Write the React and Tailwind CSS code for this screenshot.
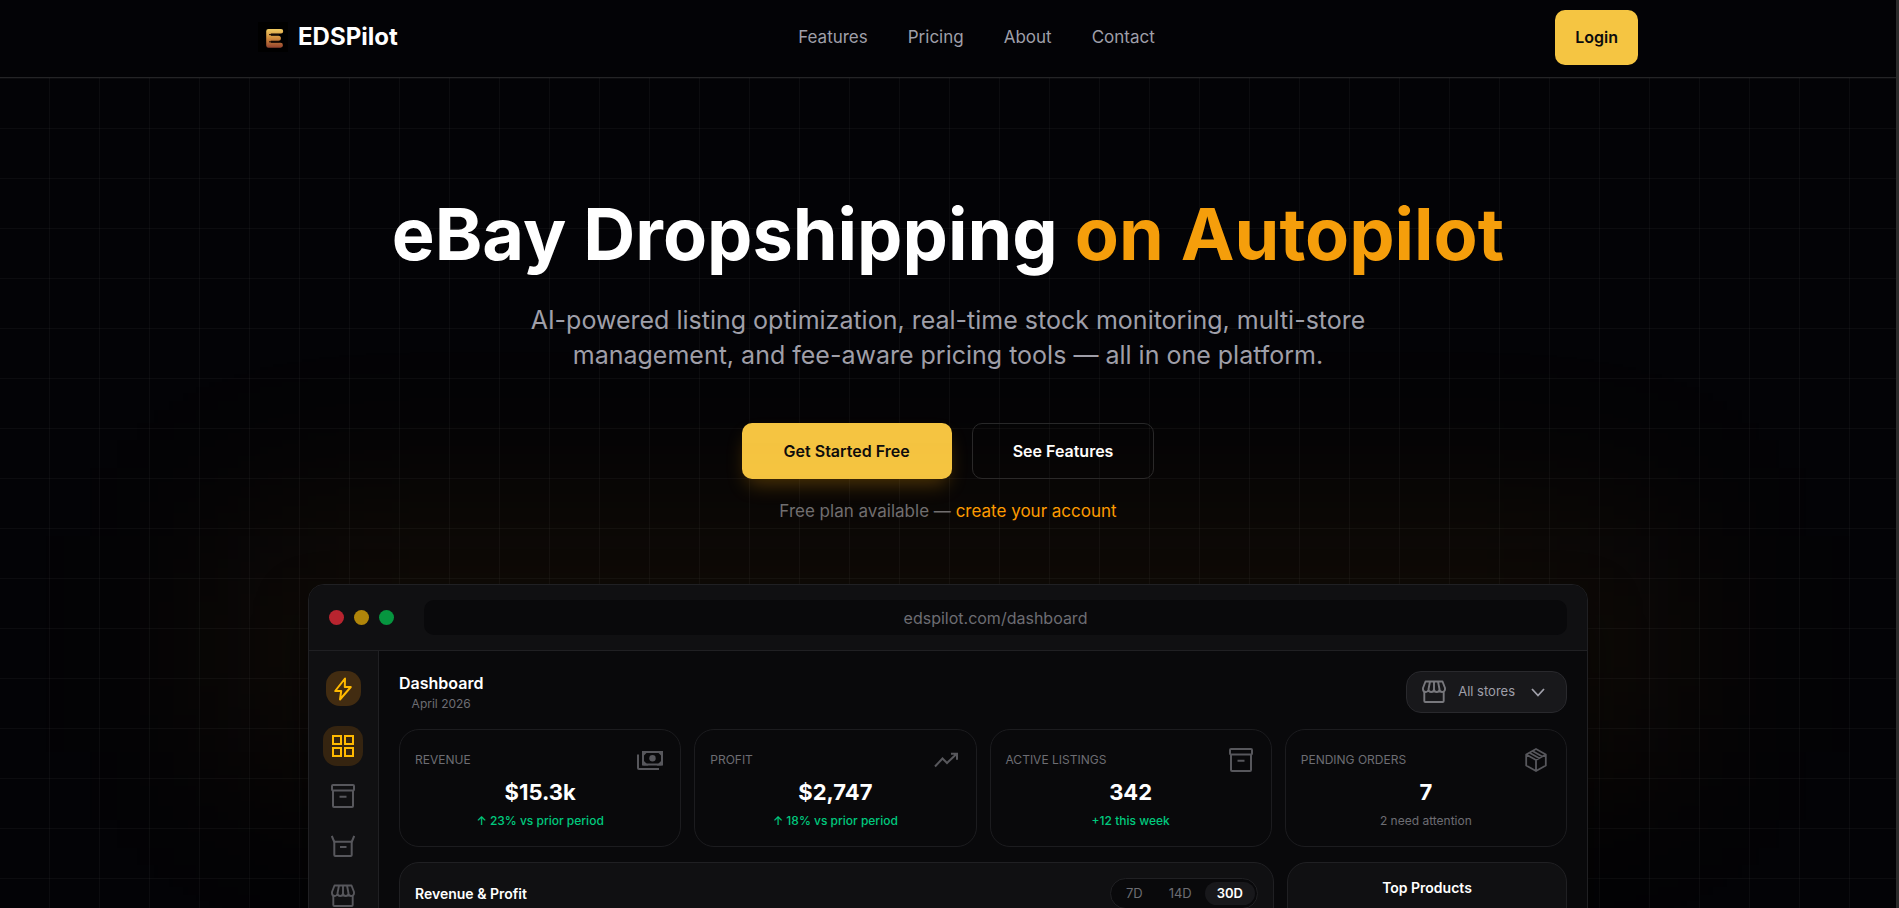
function Svg({ w = 24, h = 24, sw = 2, className = "", children }) {
  return (
    <svg
      width={w}
      height={h}
      viewBox={`0 0 ${w} ${h}`}
      fill="none"
      stroke="currentColor"
      strokeWidth={sw}
      className={`shrink-0 ${className}`}
      aria-hidden="true"
    >
      {children}
    </svg>
  );
}

const BoltIcon = () => (
  <Svg>
    <path d="M14 1.500 4.200 14h6L9 22.500 19.800 10h-6z" strokeLinejoin="round" />
  </Svg>
);

const GridIcon = () => (
  <Svg w={22} h={22}>
    <rect x="1" y="1" width="8" height="8" />
    <rect x="13" y="1" width="8" height="8" />
    <rect x="1" y="13" width="8" height="8" />
    <rect x="13" y="13" width="8" height="8" />
  </Svg>
);

const ArchiveIcon = () => (
  <Svg>
    <rect x="1" y="1" width="22" height="5.500" rx="1" />
    <path d="M2 6.500V22a1 1 0 0 0 1 1h18a1 1 0 0 0 1-1V6.500M8.500 12.700h7" />
  </Svg>
);

const OpenBoxIcon = () => (
  <Svg>
    <path d="M.8 2 3.300 8M23.200 2 20.700 8" />
    <path d="M3.300 7.800h17.400V21a1 1 0 0 1-1 1H4.300a1 1 0 0 1-1-1zM9 13h6.500" />
  </Svg>
);

const StoreIcon = () => (
  <Svg sw={1.9}>
    <path
      d="M3.500 1.500h17L23 8v1.200a2.750 2.750 0 0 1-5.500 0 2.750 2.750 0 0 1-5.500 0 2.750 2.750 0 0 1-5.500 0 2.750 2.750 0 0 1-5.500 0V8zM6.500 9.200 8 1.500M12 9.200V1.500M17.500 9.200 16 1.500"
      strokeLinejoin="round"
    />
    <path d="M2.300 11.500V21a1 1 0 0 0 1 1h17.400a1 1 0 0 0 1-1v-9.500" />
  </Svg>
);

const CashIcon = () => (
  <Svg w={26} h={20}>
    <rect x="6" y="2" width="19" height="12.500" rx="1" />
    <circle cx="15.500" cy="8.250" r="3.200" fill="currentColor" stroke="none" />
    <path d="M6 2h3L6 5zM25 2h-3l3 3zM6 14.500h3l-3-3zM25 14.500h-3l3-3z" fill="currentColor" />
    <path d="M1 4.500V18a1 1 0 0 0 1 1h20" />
  </Svg>
);

const TrendIcon = () => (
  <Svg w={24} h={16}>
    <path d="M1 14.500 8.500 6.500l4.500 4.500L22.500 2M17 1.800h6v6" />
  </Svg>
);

const PackageIcon = () => (
  <Svg w={22} h={24} sw={1.8}>
    <path
      d="M11 1l9.800 5.500v11L11 23l-9.800-5.500v-11zM1.200 6.500 11 12l9.800-5.500M11 12v11M7.500 3l9.800 5.500M4.500 4.700l9.800 5.500"
      strokeLinejoin="round"
    />
  </Svg>
);

const ChevronIcon = () => (
  <Svg w={14} h={9} sw={1.8}>
    <path d="M1 1l6 6.500L13 1" />
  </Svg>
);

const LogoMark = () => (
  <svg width="30" height="30" viewBox="0 0 30 30" className="shrink-0 bg-black" aria-hidden="true">
    <defs>
      <linearGradient id="mark" x1="0" y1="0" x2="0" y2="1">
        <stop offset="0" stopColor="#efcb62" />
        <stop offset=".5" stopColor="#d08a3c" />
        <stop offset="1" stopColor="#94432f" />
      </linearGradient>
    </defs>
    <path
      d="M10.500 7H23a2.200 2.200 0 0 1 2.200 2.300A2.200 2.200 0 0 1 23 11.500H12.800v2.200h7.600a2.200 2.200 0 0 1 0 5h-7.600V20.800h9.700a2.400 2.400 0 0 1 0 4.900h-12A2.300 2.300 0 0 1 8.200 23.500V9.300A2.300 2.300 0 0 1 10.500 7z"
      fill="url(#mark)"
    />
    <path d="M11 12.600h10M11 19.800h10" stroke="#1d0d06" strokeWidth="1" />
  </svg>
);

const NAV = ["Features", "Pricing", "About", "Contact"];

const STATS = [
  { label: "Revenue", value: "$15.3k", note: "↑ 23% vs prior period", up: true, Icon: CashIcon },
  { label: "Profit", value: "$2,747", note: "↑ 18% vs prior period", up: true, Icon: TrendIcon },
  { label: "Active Listings", value: "342", note: "+12 this week", up: true, Icon: ArchiveIcon },
  { label: "Pending Orders", value: "7", note: "2 need attention", up: false, Icon: PackageIcon },
];

const SIDE = [
  { name: "Overview", Icon: GridIcon, active: true },
  { name: "Listings", Icon: ArchiveIcon },
  { name: "Orders", Icon: OpenBoxIcon },
  { name: "Stores", Icon: StoreIcon },
];

function Header() {
  return (
    <header className="border-b border-[#242426] bg-[#030306]">
      <div className="mx-auto flex h-[77px] max-w-[1380px] items-center justify-between pb-[3px]">
        <a href="#" className="flex items-center gap-[10px]">
          <LogoMark />
          <span className="text-2xl font-bold">EDSPilot</span>
        </a>
        <nav className="flex gap-10 text-[17px] leading-6 text-[#9f9fa9]">
          {NAV.map((n) => (
            <a key={n} href={`#${n.toLowerCase()}`}>
              {n}
            </a>
          ))}
        </nav>
        <button className="h-[55px] rounded-[10px] bg-[#f5c542] px-5 text-base font-semibold text-[#0b0b0d]">
          Login
        </button>
      </div>
    </header>
  );
}

function StatCard({ label, value, note, up, Icon }) {
  return (
    <div className="h-[118px] rounded-[20px] border border-[#1c1c1f] px-[15px] pt-[15px]">
      <div className="flex h-[30px] items-center justify-between pr-[2px] text-[#57575c]">
        <span className="text-xs text-[#6d6d73] uppercase">{label}</span>
        <span className="flex w-[26px] justify-center">
          <Icon />
        </span>
      </div>
      <div className="text-center text-[22px] leading-[34px] font-bold">{value}</div>
      <div className={up ? "text-center text-xs leading-6 font-medium text-[#00c97e]" : "text-center text-xs leading-6 text-[#6d6d73]"}>
        {note}
      </div>
    </div>
  );
}

function Preview() {
  return (
    <div className="relative mx-auto max-w-[1280px]">
      <div className="absolute -inset-x-[80px] -top-[50px] h-[220px] bg-[#f59e0b]/8 blur-[100px]" />
      <div className="relative overflow-hidden rounded-t-2xl border border-[#202023] bg-[#09090b] shadow-[0_25px_50px_0_rgba(0,0,0,0.5)]">
        <div className="flex h-[66px] items-center border-b border-[#202023] bg-[#101012] px-5">
          <div className="flex gap-[10px]">
            <span className="size-[15px] rounded-full bg-[#b8242f]" />
            <span className="size-[15px] rounded-full bg-[#b0850a]" />
            <span className="size-[15px] rounded-full bg-[#06953f]" />
          </div>
          <div className="ml-[30px] flex h-[35px] flex-1 items-center justify-center rounded-[10px] bg-[#09090b] text-base text-[#6d6d73]">
            edspilot.com/dashboard
          </div>
        </div>
        <div className="flex">
          <aside className="flex w-[70px] shrink-0 flex-col items-center border-r border-[#202023] bg-[#101012] pt-5 pr-px">
            <div className="mb-5 flex size-[35px] items-center justify-center rounded-[14px] bg-[#422c11] text-[#ffb900]">
              <BoltIcon />
            </div>
            <div className="flex flex-col gap-[10px]">
              {SIDE.map(({ name, Icon, active }) => (
                <button
                  key={name}
                  aria-label={name}
                  className={
                    active
                      ? "flex size-10 items-center justify-center rounded-[14px] bg-[#352410] text-[#ffb900]"
                      : "flex size-10 items-center justify-center rounded-[14px] text-[#57575c]"
                  }
                >
                  <Icon />
                </button>
              ))}
            </div>
          </aside>
          <div className="min-w-0 flex-1 p-5">
            <div className="mb-4 flex h-[42px] items-center justify-between">
              <div className="text-center">
                <div className="text-base leading-6 font-semibold">Dashboard</div>
                <div className="text-xs leading-[18px] text-[#6d6d73]">April 2026</div>
              </div>
              <button className="flex h-[42px] items-center rounded-[15px] border border-[#29292d] bg-[#18181b] pr-[21px] pl-[15px] text-[13px] text-[#9f9fa9]">
                <span className="text-[#78787d]">
                  <StoreIcon />
                </span>
                <span className="mr-4 ml-3">All stores</span>
                <ChevronIcon />
              </button>
            </div>
            <div className="grid grid-cols-4 gap-[13px]">
              {STATS.map((s) => (
                <StatCard key={s.label} {...s} />
              ))}
            </div>
            <div className="mt-[15px] flex gap-[13px]">
              <section className="h-[320px] flex-1 rounded-[20px] border border-[#202023] bg-[#101012] p-[15px]">
                <div className="flex items-center justify-between">
                  <h2 className="text-sm font-semibold">Revenue &amp; Profit</h2>
                  <div className="flex h-[31px] items-center rounded-full border border-[#202023] bg-[#09090b] px-[2px] text-[13px] text-[#6d6d73]">
                    <button className="px-[13px]">7D</button>
                    <button className="px-[13px]">14D</button>
                    <button className="h-[23px] rounded-full bg-[#18181b] px-3 font-semibold text-white">30D</button>
                  </div>
                </div>
              </section>
              <section className="h-[320px] w-[280px] rounded-[20px] border border-[#202023] bg-[#101012] p-[15px]">
                <h2 className="text-center text-sm leading-5 font-semibold">Top Products</h2>
              </section>
            </div>
          </div>
        </div>
      </div>
    </div>
  );
}

export default function App() {
  return (
    <div className="flex h-screen overflow-hidden bg-[#030306] font-['Inter','Noto_Sans',sans-serif] text-white">
      <div className="min-w-0 flex-1 overflow-hidden">
        <Header />
        <main className="bg-[linear-gradient(rgba(255,255,255,0.035)_1px,transparent_1px),linear-gradient(90deg,rgba(255,255,255,0.035)_1px,transparent_1px)] bg-[size:50px_50px] bg-[position:-1px_0px] pt-[108px]">
          <div className="flex flex-col items-center text-center">
            <h1 className="text-7xl leading-[96px] font-bold">
              eBay Dropshipping <span className="text-[#f59e0b]">on Autopilot</span>
            </h1>
            <p className="mt-[21px] max-w-[860px] text-[25px] leading-[35px] text-[#9f9fa9]">
              AI-powered listing optimization, real-time stock monitoring, multi-store management, and fee-aware pricing
              tools — all in one platform.
            </p>
            <div className="mt-[50px] flex gap-5">
              <button className="h-14 rounded-[10px] bg-[#f5c542] px-[42px] text-base font-semibold text-[#0b0b0d] shadow-[0_10px_20px_-5px_rgba(245,158,11,0.3)]">
                Get Started Free
              </button>
              <button className="h-14 rounded-[10px] border border-[#27272a] px-10 text-base font-semibold">
                See Features
              </button>
            </div>
            <p className="mt-5 text-[17px] leading-6 text-[#6d6d73]">
              Free plan available —{" "}
              <a href="#signup" className="text-[#fe9a00]">
                create your account
              </a>
            </p>
          </div>
          <div className="mt-[61px]">
            <Preview />
          </div>
        </main>
      </div>
      <div className="w-[3px] shrink-0 bg-[#2b2b2b]" />
    </div>
  );
}
